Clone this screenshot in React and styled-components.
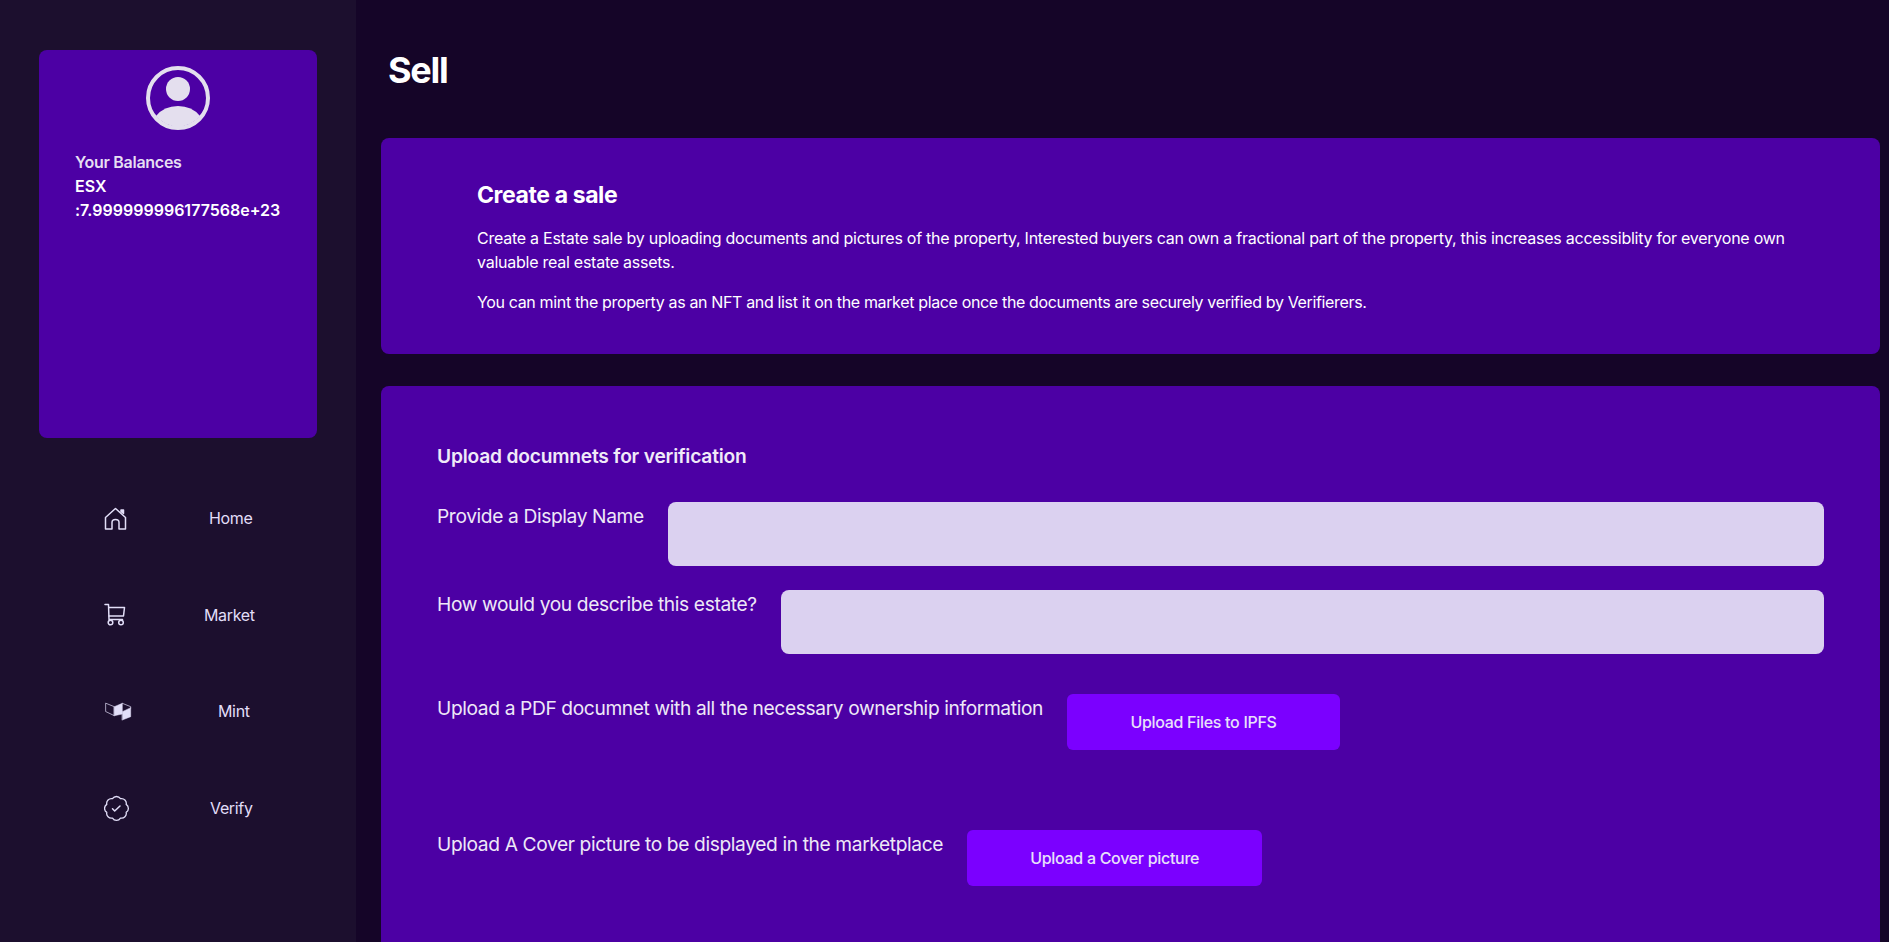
import React from 'react'
import styled, { createGlobalStyle } from 'styled-components'

const GlobalStyle = createGlobalStyle`
  html, body {
    margin: 0;
    height: 100%;
    overflow: hidden;
    background: #150528;
  }
  * { box-sizing: border-box; }
`

const Page = styled.div`
  display: flex;
  height: 942px;
  overflow: hidden;
  font-family: Inter, "Liberation Sans", sans-serif;
  color: #fff;
`

const Sidebar = styled.aside`
  flex: 0 0 356px;
  padding: 50px 39px 0;
  background: #1c0f2e;
`

const BalanceCard = styled.div`
  height: 388px;
  padding: 16px 36px;
  border-radius: 8px;
  background: #4c00a4;
`

const Avatar = styled.svg`
  display: block;
  width: 64px;
  height: 64px;
  margin: 0 auto 20px;
`

const BalanceLine = styled.div`
  max-width: 190px;
  font-size: 16px;
  font-weight: 600;
  line-height: 24px;
  letter-spacing: ${(p) => (p.$dim ? '-0.28px' : '0')};
  color: ${(p) => (p.$dim ? '#e6dff2' : '#fff')};
`

const Nav = styled.nav`
  display: flex;
  flex-direction: column;
  gap: 72.7px;
  margin-top: 68px;
  padding-left: 65px;
`

const NavRow = styled.a`
  display: flex;
  align-items: center;
  gap: ${(p) => p.$gap}px;
  height: 24px;
  font-size: 16px;
  line-height: 24px;
  letter-spacing: -0.35px;
  color: #e2def8;
`

const NavIcon = styled.svg`
  flex: 0 0 28px;
  width: 28px;
  height: 28px;
  fill: none;
  stroke: #e2def8;
  stroke-width: 1.5;
  stroke-linejoin: round;
  stroke-linecap: round;
`

const Main = styled.main`
  flex: 1;
  min-width: 0;
  padding: 50px 9px 0 25px;
`

const Title = styled.h1`
  margin: 0 0 48px 7px;
  font-size: 36px;
  font-weight: 700;
  line-height: 40px;
  letter-spacing: -1.25px;
`

const InfoCard = styled.section`
  height: 216px;
  padding: 42px 56px 0 96px;
  border-radius: 8px;
  background: #4c00a4;
`

const InfoHeading = styled.h2`
  margin: 0 0 16px;
  font-size: 23px;
  font-weight: 700;
  line-height: 30px;
  letter-spacing: -0.4px;
`

const InfoText = styled.p`
  margin: 0 0 16px;
  font-size: 16px;
  line-height: 24px;
  letter-spacing: ${(p) => p.$spacing}px;
`

const FormCard = styled.section`
  margin-top: 32px;
  height: 700px;
  padding: 58px 56px 0;
  border-radius: 8px;
  background: #4c00a4;
`

const FormHeading = styled.h3`
  margin: 0 0 34px;
  font-size: 19.2px;
  font-weight: 600;
  line-height: 24px;
  letter-spacing: -0.2px;
  color: #f0eaf8;
`

const FormRow = styled.div`
  display: flex;
  align-items: flex-start;
  gap: 24px;
  margin-bottom: ${(p) => p.$after}px;
`

const Label = styled.label`
  flex: none;
  font-size: 19.2px;
  line-height: 28px;
  letter-spacing: -0.38px;
  color: #eee8f7;
`

const TextInput = styled.input`
  flex: 1;
  min-width: 0;
  height: 64px;
  border: 0;
  border-radius: 8px;
  background: #dbd1f0;
`

const UploadButton = styled.button`
  flex: none;
  width: ${(p) => p.$width}px;
  height: 56px;
  border: 0;
  border-radius: 6px;
  background: #7b00ff;
  color: #e8e0fa;
  font-family: inherit;
  font-size: 16px;
  font-weight: 500;
  letter-spacing: -0.3px;
`

const HomeIcon = () => (
  <NavIcon viewBox="0 0 28 28">
    <path d="M1.5 25V13.5L11.5 4.5L21.5 13.5V25H15V18.5Q15 15.5 11.5 15.5T8 18.5V25Z" />
    <path d="M17 6H19.5V9.5L17 7.5Z" fill="#e2def8" />
  </NavIcon>
)

const CartIcon = () => (
  <NavIcon viewBox="0 1 28 28">
    <path d="M1 4.5H4.5L5 19.5H18.5" />
    <path d="M4.7 7.5H20.5L19.5 16H5" />
    <circle cx="6.5" cy="22.5" r="2.3" />
    <circle cx="17" cy="22.5" r="2.3" />
  </NavIcon>
)

const MintIcon = () => (
  <NavIcon viewBox="0 0 28 28">
    <path d="M2 6.3L10.3 9.7V18.7L2 14.7Z" strokeWidth="0.7" />
    <path d="M18.3 6.3L26.7 9.7V11" strokeWidth="0.7" />
    <path d="M10.3 9.7L18.3 6.3V17L10.3 18.7Z" fill="#e2def8" strokeWidth="0.5" />
    <path d="M18.3 14.7L26.7 10.7V19.7L18.3 23Z" fill="#e2def8" strokeWidth="0.5" />
  </NavIcon>
)

const VerifyIcon = () => (
  <NavIcon viewBox="0 0 28 28">
    <path
      transform="translate(-1.8 0.1) scale(1.19)"
      strokeWidth="1.1"
      d="M3.85 8.62a4 4 0 0 1 4.78-4.77 4 4 0 0 1 6.74 0 4 4 0 0 1 4.78 4.78 4 4 0 0 1 0 6.74 4 4 0 0 1-4.77 4.78 4 4 0 0 1-6.75 0 4 4 0 0 1-4.78-4.77 4 4 0 0 1 0-6.76Z"
    />
    <path d="M8.5 14.7L10.7 17L16 12" />
  </NavIcon>
)

const navItems = [
  { label: 'Home', gap: 77, icon: <HomeIcon /> },
  { label: 'Market', gap: 72, icon: <CartIcon /> },
  { label: 'Mint', gap: 86, icon: <MintIcon /> },
  { label: 'Verify', gap: 78, icon: <VerifyIcon /> },
]

const App = () => {
  return (
    <Page>
      <GlobalStyle />
      <Sidebar>
        <BalanceCard>
          <Avatar viewBox="0 0 64 64">
            <circle cx="32" cy="32" r="30" fill="none" stroke="#e4dfee" strokeWidth="4" />
            <circle cx="32" cy="23" r="12" fill="#e4dfee" />
            <path d="M10 50Q18 40 32 40T54 50A28.4 28.4 0 0 1 10 50Z" fill="#e4dfee" />
          </Avatar>
          <BalanceLine $dim>Your Balances</BalanceLine>
          <BalanceLine>ESX :7.999999996177568e+23</BalanceLine>
        </BalanceCard>
        <Nav>
          {navItems.map((item) => (
            <NavRow key={item.label} $gap={item.gap}>
              {item.icon}
              <span>{item.label}</span>
            </NavRow>
          ))}
        </Nav>
      </Sidebar>
      <Main>
        <Title>Sell</Title>
        <InfoCard>
          <InfoHeading>Create a sale</InfoHeading>
          <InfoText $spacing={-0.25}>
            Create a Estate sale by uploading documents and pictures of the property, Interested buyers can own a fractional part of the property, this increases accessiblity for everyone own valuable real estate assets.
          </InfoText>
          <InfoText $spacing={-0.35}>
            You can mint the property as an NFT and list it on the market place once the documents are securely verified by Verifierers.
          </InfoText>
        </InfoCard>
        <FormCard>
          <FormHeading>Upload documnets for verification</FormHeading>
          <FormRow $after={24}>
            <Label>Provide a Display Name</Label>
            <TextInput />
          </FormRow>
          <FormRow $after={40}>
            <Label>How would you describe this estate?</Label>
            <TextInput />
          </FormRow>
          <FormRow $after={80}>
            <Label>Upload a PDF documnet with all the necessary ownership information</Label>
            <UploadButton $width={273}>Upload Files to IPFS</UploadButton>
          </FormRow>
          <FormRow $after={0}>
            <Label>Upload A Cover picture to be displayed in the marketplace</Label>
            <UploadButton $width={295}>Upload a Cover picture</UploadButton>
          </FormRow>
        </FormCard>
      </Main>
    </Page>
  )
}

export default App
